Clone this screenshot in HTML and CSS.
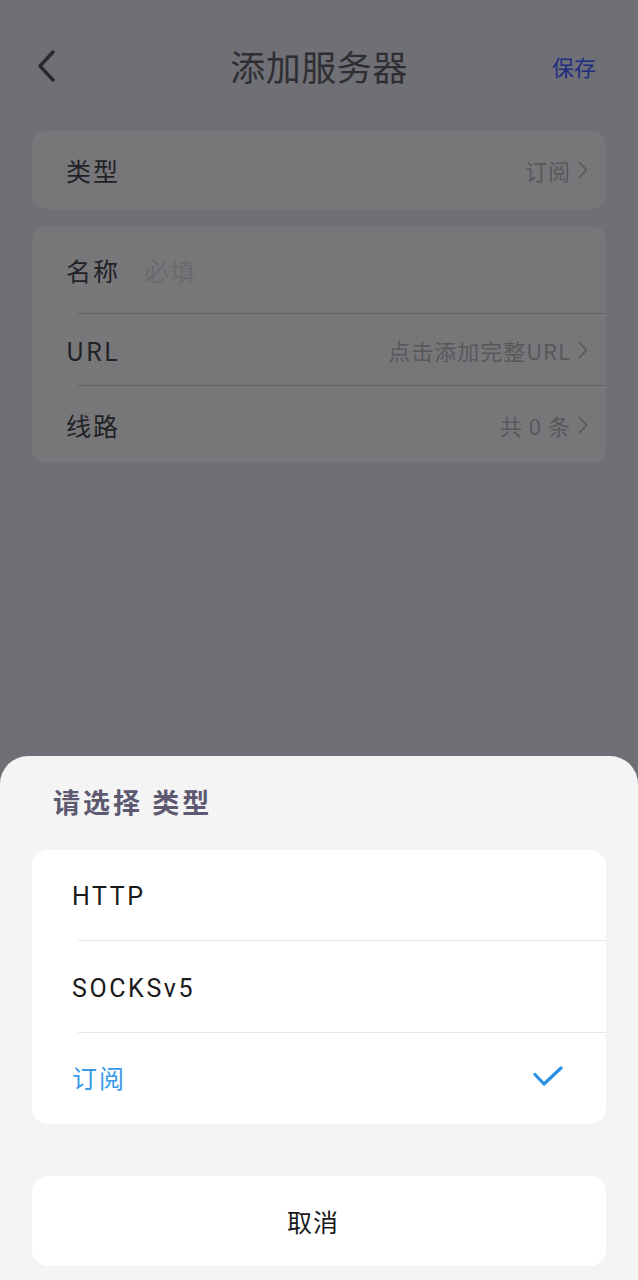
FILE: index.html
```html
<!DOCTYPE html>
<html lang="zh">
<head>
<meta charset="utf-8">
<title>添加服务器</title>
<link rel="stylesheet" href="styles.css">
</head>
<body>
<div class="page">
  <header class="nav">
    <span class="back">
      <svg width="20" height="32" viewBox="0 0 20 32"><path d="M17 2 L4 16 L17 30" fill="none" stroke="#29292d" stroke-width="3.4" stroke-linecap="round" stroke-linejoin="round"/></svg>
    </span>
    <h1 class="title">添加服务器</h1>
    <span class="save">保存</span>
  </header>

  <section class="card">
    <div class="row row-type">
      <span class="label">类型</span>
      <span class="value">订阅<svg class="chev" width="10" height="18" viewBox="0 0 10 18"><path d="M1.5 1.5 L8.5 9 L1.5 16.5" fill="none" stroke="#58585b" stroke-width="1.6" stroke-linecap="round" stroke-linejoin="round"/></svg></span>
    </div>
  </section>

  <section class="card card-gap">
    <div class="row row-name">
      <span class="label">名称</span>
      <span class="placeholder">必填</span>
    </div>
    <div class="divider"></div>
    <div class="row row-url">
      <span class="label">URL</span>
      <span class="value">点击添加完整URL<svg class="chev" width="10" height="18" viewBox="0 0 10 18"><path d="M1.5 1.5 L8.5 9 L1.5 16.5" fill="none" stroke="#58585b" stroke-width="1.6" stroke-linecap="round" stroke-linejoin="round"/></svg></span>
    </div>
    <div class="divider"></div>
    <div class="row row-line">
      <span class="label">线路</span>
      <span class="value">共 0 条<svg class="chev" width="10" height="18" viewBox="0 0 10 18"><path d="M1.5 1.5 L8.5 9 L1.5 16.5" fill="none" stroke="#58585b" stroke-width="1.6" stroke-linecap="round" stroke-linejoin="round"/></svg></span>
    </div>
  </section>
</div>

<div class="sheet">
  <h2 class="sheet-title">请选择 类型</h2>
  <div class="options">
    <div class="opt opt-1"><span class="opt-text">HTTP</span></div>
    <div class="divider light"></div>
    <div class="opt opt-2"><span class="opt-text">SOCKSv5</span></div>
    <div class="divider light"></div>
    <div class="opt opt-3 selected">
      <span class="opt-text cjk">订阅</span>
      <svg class="check" width="32" height="26" viewBox="0 0 32 26"><path d="M3 8.5 L12 18 L29 2" fill="none" stroke="#2b8fe6" stroke-width="3.2" stroke-linecap="round" stroke-linejoin="round"/></svg>
    </div>
  </div>
  <div class="cancel">取消</div>
</div>
</body>
</html>
```

FILE: styles.css
```css
* { box-sizing: border-box; margin: 0; padding: 0; }

html, body {
  width: 638px;
  height: 1280px;
  overflow: hidden;
}

body {
  background: #6f7075;
  font-family: "Noto Sans", "Noto Sans CJK SC", sans-serif;
  position: relative;
}

.page {
  display: flex;
  flex-direction: column;
  padding: 0 32px;
}

.nav {
  height: 54px;
  margin-top: 39px;
  display: flex;
  align-items: center;
  justify-content: space-between;
  position: relative;
}

.back {
  display: flex;
  align-items: center;
  margin-left: 4px;
  width: 20px;
  height: 32px;
}

.title {
  font-family: "Noto Sans CJK SC", sans-serif;
  font-weight: 400;
  font-size: 35px;
  line-height: 54px;
  letter-spacing: 0.5px;
  color: #2f2f33;
  position: absolute;
  left: 0;
  right: 0;
  text-align: center;
  pointer-events: none;
}

.save {
  font-family: "Noto Sans CJK SC", sans-serif;
  font-size: 22px;
  line-height: 30px;
  color: #1e2d82;
  margin-right: 10px;
}

.card {
  margin-top: 38px;
  background: #77777a;
  border-radius: 14px;
  display: flex;
  flex-direction: column;
}

.card-gap { margin-top: 17px; }

.row {
  display: flex;
  align-items: center;
  padding: 0 18px 0 34px;
}

.row-type { height: 78px; }
.row-name { height: 87px; }
.row-url { height: 71px; }
.row-line { height: 77px; }

.label {
  font-family: "Noto Sans CJK SC", sans-serif;
  font-size: 25px;
  line-height: 30px;
  letter-spacing: 2px;
  color: #222226;
  flex: none;
}

.placeholder {
  font-family: "Noto Sans CJK SC", sans-serif;
  font-size: 25px;
  line-height: 30px;
  letter-spacing: 1px;
  color: #6a6a6d;
  margin-left: 24px;
}

.value {
  margin-left: auto;
  display: flex;
  align-items: center;
  font-family: "Noto Sans CJK SC", sans-serif;
  font-size: 22px;
  line-height: 28px;
  letter-spacing: 1px;
  color: #58585b;
}

.chev { margin-left: 7px; flex: none; }

.divider {
  height: 1px;
  margin-left: 46px;
  background: #626266;
}

.divider.light {
  background: #e6e6e8;
}

.sheet {
  position: absolute;
  left: 0;
  right: 0;
  bottom: 0;
  height: 524px;
  background: #f4f4f4;
  border-radius: 28px 28px 0 0;
  padding: 28px 32px 14px;
  display: flex;
  flex-direction: column;
}

.sheet-title {
  font-family: "Noto Sans CJK SC", sans-serif;
  font-weight: 700;
  font-size: 27px;
  line-height: 36px;
  letter-spacing: 3px;
  color: #5c5971;
  padding-left: 21px;
}

.options {
  margin-top: 30px;
  background: #ffffff;
  border-radius: 16px;
  display: flex;
  flex-direction: column;
}

.opt {
  display: flex;
  align-items: center;
  padding: 0 42px 0 40px;
}

.opt-1 { height: 90px; }
.opt-2 { height: 91px; }
.opt-3 { height: 91px; }

.opt-text {
  font-family: "Roboto", "Noto Sans CJK SC", sans-serif;
  font-size: 25px;
  line-height: 30px;
  letter-spacing: 2.6px;
  color: #1a1a1a;
  padding-top: 4px;
}

.opt-text.cjk {
  font-family: "Noto Sans CJK SC", sans-serif;
  font-size: 25px;
  letter-spacing: 2px;
  color: #3a9ae8;
  padding-top: 0;
  padding-bottom: 3px;
}

.check {
  margin-left: auto;
}

.cancel {
  margin-top: 52px;
  height: 91px;
  background: #ffffff;
  border-radius: 16px;
  display: flex;
  align-items: center;
  justify-content: center;
  padding-right: 12px;
  font-family: "Noto Sans CJK SC", sans-serif;
  font-size: 25px;
  letter-spacing: 1px;
  color: #1a1a1a;
}
```
